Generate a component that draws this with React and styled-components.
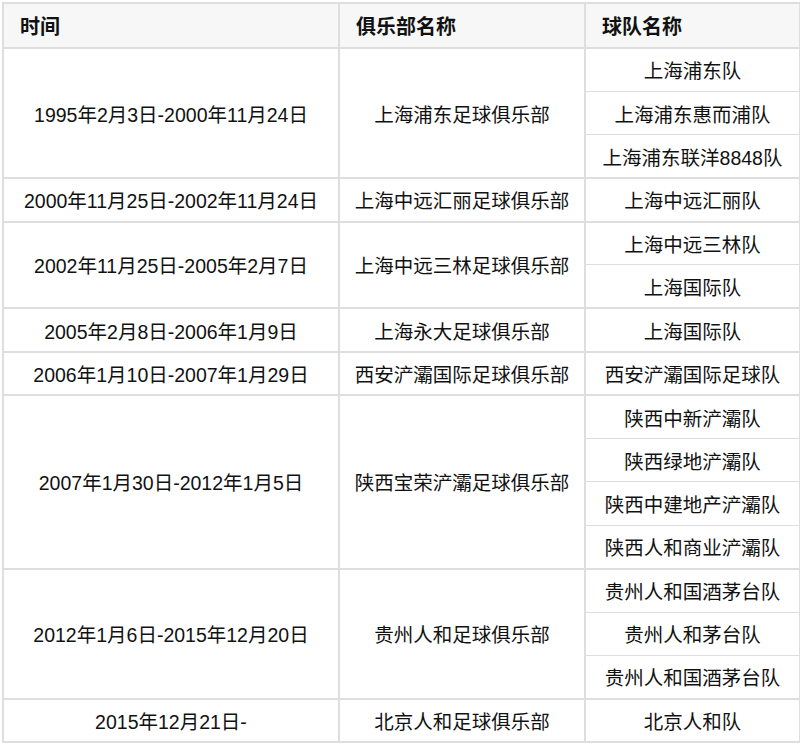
import React from "react";
import styled, {createGlobalStyle} from "styled-components";

const rows = [
  {
    time: "1995年2月3日-2000年11月24日",
    club: "上海浦东足球俱乐部",
    teams: ["上海浦东队", "上海浦东惠而浦队", "上海浦东联洋8848队"],
  },
  {
    time: "2000年11月25日-2002年11月24日",
    club: "上海中远汇丽足球俱乐部",
    teams: ["上海中远汇丽队"],
  },
  {
    time: "2002年11月25日-2005年2月7日",
    club: "上海中远三林足球俱乐部",
    teams: ["上海中远三林队", "上海国际队"],
  },
  {
    time: "2005年2月8日-2006年1月9日",
    club: "上海永大足球俱乐部",
    teams: ["上海国际队"],
  },
  {
    time: "2006年1月10日-2007年1月29日",
    club: "西安浐灞国际足球俱乐部",
    teams: ["西安浐灞国际足球队"],
  },
  {
    time: "2007年1月30日-2012年1月5日",
    club: "陕西宝荣浐灞足球俱乐部",
    teams: ["陕西中新浐灞队", "陕西绿地浐灞队", "陕西中建地产浐灞队", "陕西人和商业浐灞队"],
  },
  {
    time: "2012年1月6日-2015年12月20日",
    club: "贵州人和足球俱乐部",
    teams: ["贵州人和国酒茅台队", "贵州人和茅台队", "贵州人和国酒茅台队"],
  },
  {
    time: "2015年12月21日-",
    club: "北京人和足球俱乐部",
    teams: ["北京人和队"],
  },
];

const GlobalStyle = createGlobalStyle`
  body {
    margin: 0;
    background: #fff;
    font-family: "Liberation Sans", "Noto Sans CJK SC", sans-serif;
  }
`;

const Wrapper = styled.div`
  padding: 2px 0 0 2px;
`;

const Table = styled.table`
  width: 797px;
  border-collapse: collapse;
  table-layout: fixed;
  color: #111;
`;

const Col = styled.col`
  width: ${(p) => p.w}px;
`;

const HeadCell = styled.th`
  height: 43px;
  padding: 0 0 0 16px;
  background: #f7f7f7;
  border: 2px solid #dedede;
  text-align: left;
  font-size: 20px;
  font-weight: bold;
  color: #111;
`;

const Row = styled.tr`
  height: 43.4px;
`;

const Cell = styled.td`
  padding: 0;
  border: 2px solid #dedede;
  text-align: center;
  vertical-align: middle;
  font-size: 19.5px;
  white-space: nowrap;
`;

const TeamCell = styled(Cell)`
  border-top-width: ${(p) => (p.first ? 2 : 1)}px;
  border-bottom-width: ${(p) => (p.last ? 2 : 1)}px;
`;

const App = () => {
  return (
    <Wrapper>
      <GlobalStyle />
      <Table>
        <colgroup>
          <Col w={336} />
          <Col w={246} />
          <Col w={215} />
        </colgroup>
        <thead>
          <tr>
            <HeadCell>时间</HeadCell>
            <HeadCell>俱乐部名称</HeadCell>
            <HeadCell>球队名称</HeadCell>
          </tr>
        </thead>
        <tbody>
          {rows.map((r) =>
            r.teams.map((team, i) => (
              <Row key={r.time + i}>
                {i === 0 && <Cell rowSpan={r.teams.length}>{r.time}</Cell>}
                {i === 0 && <Cell rowSpan={r.teams.length}>{r.club}</Cell>}
                <TeamCell first={i === 0} last={i === r.teams.length - 1}>
                  {team}
                </TeamCell>
              </Row>
            ))
          )}
        </tbody>
      </Table>
    </Wrapper>
  );
};

export default App;
